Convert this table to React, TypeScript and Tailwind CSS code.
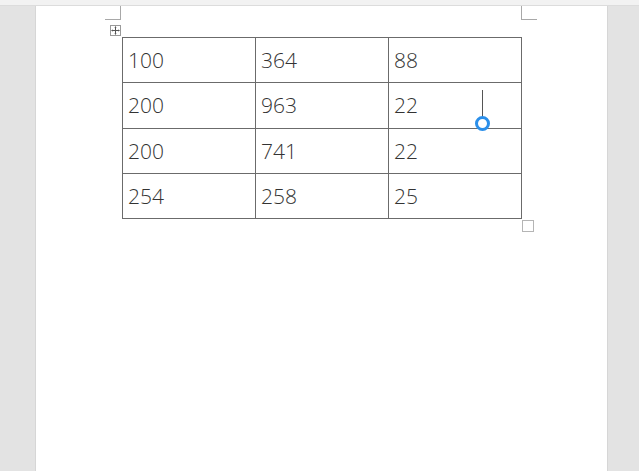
const rows = [
  ["100", "364", "88"],
  ["200", "963", "22"],
  ["200", "741", "22"],
  ["254", "258", "25"],
];

export default function App() {
  return (
    <div className="w-[639px] h-[471px] bg-[#e3e3e3] flex flex-col overflow-hidden">
      <div className="h-[6px] bg-[#f2f2f2] border-b border-[#dcdcdc] shrink-0" />
      <div className="flex flex-1">
        <div className="w-[36px] border-r border-[#d6d6d6]" />
        <div className="relative w-[571px] bg-white">
          {/* corner marks */}
          <div className="absolute left-[69px] top-0 w-[16px] h-[14px] border-r border-b border-[#a8a8a8]" />
          <div className="absolute left-[485px] top-0 w-[16px] h-[14px] border-l border-b border-[#a8a8a8]" />
          {/* move handle */}
          <div className="absolute left-[74px] top-[19px] w-[11px] h-[11px] border border-[#9a9a9a] bg-white flex items-center justify-center">
            <svg width="9" height="9" viewBox="0 0 9 9" className="text-[#555]">
              <path d="M4.5 0.5V8.5M0.5 4.5H8.5" stroke="currentColor" strokeWidth="1" />
              <path d="M4.5 0.5L3.3 1.8H5.7ZM4.5 8.5L3.3 7.2H5.7ZM0.5 4.5L1.8 3.3V5.7ZM8.5 4.5L7.2 3.3V5.7Z" fill="currentColor" />
            </svg>
          </div>
          <div className="pl-[86px] pt-[31px]">
            <table className="border-collapse font-['Open_Sans',sans-serif] font-light text-[21px] text-[#333]">
              <tbody>
                {rows.map((r, i) => (
                  <tr key={i} className={i === 1 ? "h-[46px]" : "h-[45px]"}>
                    {r.map((c, j) => (
                      <td key={j} className="w-[133px] border border-[#6b6b6b] pl-[5px] p-0 align-middle leading-none">
                        {c}
                      </td>
                    ))}
                  </tr>
                ))}
              </tbody>
            </table>
          </div>
          {/* resize handle */}
          <div className="absolute left-[486px] top-[214px] w-[12px] h-[12px] border border-[#b5b5b5] bg-white" />
          {/* rotation-like handle */}
          <div className="absolute left-[446px] top-[84px] w-px h-[27px] bg-[#555]" />
          <div className="absolute left-[439px] top-[110px] w-[15px] h-[15px] rounded-full border-[3.5px] border-[#2b8fea] bg-white" />
        </div>
        <div className="flex-1 border-l border-[#d6d6d6]" />
      </div>
    </div>
  );
}
